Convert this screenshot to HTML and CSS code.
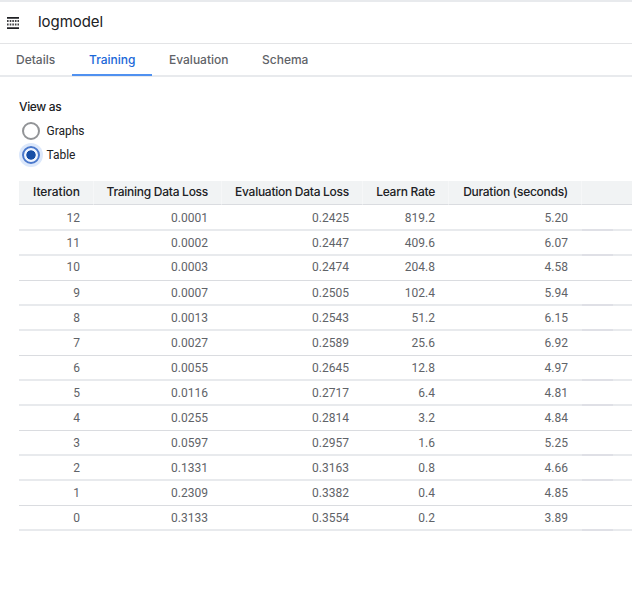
FILE: index.html
```html
<!DOCTYPE html>
<html lang="en">
<head>
<meta charset="utf-8">
<title>logmodel</title>
<link rel="stylesheet" href="styles.css">
</head>
<body>
<header class="header">
<svg class="icon" width="12" height="12" viewBox="0 0 12 12" fill="#202124"><path d="M0 0h12v1.7H0zM0 10.2h12V12H0z"/><path opacity=".85" d="M0 3h1.6v2H0zM2.7 3h1.6v2H2.7zM5.3 3h1.6v2H5.3zM7.9 3h1.6v2H7.9zM10.5 3H12v2h-1.5zM0 6.5h1.6v2H0zM2.7 6.5h1.6v2H2.7zM5.3 6.5h1.6v2H5.3zM7.9 6.5h1.6v2H7.9zM10.5 6.5H12v2h-1.5z"/></svg>
<h1 class="title">logmodel</h1>
</header>
<nav class="tabs">
<a class="tab details">Details</a>
<a class="tab training">Training</a>
<a class="tab evaluation">Evaluation</a>
<a class="tab schema">Schema</a>
</nav>
<main class="content">
<h2 class="view-label">View as</h2>
<div class="option"><span class="radio"></span><span>Graphs</span></div>
<div class="option"><span class="radio checked"></span><span>Table</span></div>
<table class="results">
<colgroup><col class="c1"><col class="c2"><col class="c3"><col class="c4"><col class="c5"><col class="c6"><col></colgroup>
<thead><tr><th>Iteration</th><th>Training Data Loss</th><th>Evaluation Data Loss</th><th>Learn Rate</th><th>Duration (seconds)</th><th></th><th></th></tr></thead>
<tbody>
<tr><td>12</td><td>0.0001</td><td>0.2425</td><td>819.2</td><td>5.20</td><td></td><td></td></tr>
<tr><td>11</td><td>0.0002</td><td>0.2447</td><td>409.6</td><td>6.07</td><td></td><td></td></tr>
<tr><td>10</td><td>0.0003</td><td>0.2474</td><td>204.8</td><td>4.58</td><td></td><td></td></tr>
<tr><td>9</td><td>0.0007</td><td>0.2505</td><td>102.4</td><td>5.94</td><td></td><td></td></tr>
<tr><td>8</td><td>0.0013</td><td>0.2543</td><td>51.2</td><td>6.15</td><td></td><td></td></tr>
<tr><td>7</td><td>0.0027</td><td>0.2589</td><td>25.6</td><td>6.92</td><td></td><td></td></tr>
<tr><td>6</td><td>0.0055</td><td>0.2645</td><td>12.8</td><td>4.97</td><td></td><td></td></tr>
<tr><td>5</td><td>0.0116</td><td>0.2717</td><td>6.4</td><td>4.81</td><td></td><td></td></tr>
<tr><td>4</td><td>0.0255</td><td>0.2814</td><td>3.2</td><td>4.84</td><td></td><td></td></tr>
<tr><td>3</td><td>0.0597</td><td>0.2957</td><td>1.6</td><td>5.25</td><td></td><td></td></tr>
<tr><td>2</td><td>0.1331</td><td>0.3163</td><td>0.8</td><td>4.66</td><td></td><td></td></tr>
<tr><td>1</td><td>0.2309</td><td>0.3382</td><td>0.4</td><td>4.85</td><td></td><td></td></tr>
<tr><td>0</td><td>0.3133</td><td>0.3554</td><td>0.2</td><td>3.89</td><td></td><td></td></tr>
</tbody>
</table>
</main>
</body>
</html>
```
FILE: styles.css
```css
* { box-sizing: border-box; }
body { margin: 0; height: 613px; overflow: hidden; background: #fff; color: #202124; font-family: Roboto, sans-serif; font-size: 12px; }
.header { display: flex; align-items: center; height: 44px; padding-left: 7px; border-top: 2px solid #e8eaed; border-bottom: 1px solid #e3e4e6; }
.icon { margin-top: 1px; }
.title { margin: -2px 0 0 19px; font-family: Inter, sans-serif; font-size: 15px; font-weight: 400; line-height: 20px; letter-spacing: -.05px; }
.tabs { display: flex; height: 33px; border-bottom: 2px solid #e8eaed; font-family: Inter, sans-serif; font-size: 12px; font-weight: 450; color: #5f6368; }
.tab { height: 32px; padding: 0 16px; line-height: 32px; }
.details { width: 72px; }
.training { width: 80px; padding-left: 17px; color: #1a67d8; border-bottom: 2px solid #5091f0; }
.evaluation { width: 94px; padding-left: 17px; }
.schema { width: 80px; }
.content { padding: 22px 0 0 19px; }
.view-label { margin: 0 0 4px; font-family: Inter, sans-serif; font-size: 12px; font-weight: 500; line-height: 16px; letter-spacing: -.35px; }
.option { display: flex; align-items: center; gap: 7px; height: 24px; padding-left: 3px; letter-spacing: -.03px; }
.option span:last-child { margin-left: -.5px; }
.radio { width: 18px; height: 18px; border: 2px solid #929497; border-radius: 50%; }
.checked { border-color: #4a78cc; background: radial-gradient(circle, #174ea6 0 4.3px, #f0f5fe 5px); box-shadow: 0 0 0 3px #dce8fb; }
.results { width: 613px; margin-top: 14px; table-layout: fixed; border-collapse: separate; border-spacing: 0; }
.c1 { width: 75px; }
.c2 { width: 128px; }
.c3 { width: 141px; }
.c4 { width: 86px; }
.c5 { width: 133px; }
.c6 { width: 31px; }
th, td { padding: 0 14px 0 0; text-align: right; white-space: nowrap; }
th { height: 24px; padding-bottom: 2px; border-bottom: 1px solid #dadce0; background: #f1f3f4; font-family: Inter, sans-serif; font-weight: 500; font-size: 12px; letter-spacing: -.27px; }
th:not(:nth-last-child(-n+2)) { border-right: 1px solid #f6f7f8; padding-right: 13px; }
th:nth-child(1) { letter-spacing: -.05px; }
td { height: 25px; padding-top: 1px; border-bottom: 2px solid #e8eaed; color: #5f6368; }
td:nth-child(6) { border-bottom-color: #dfe0e6; }
tr:first-child td { height: 26px; padding-top: 2px; }
tr:nth-child(3n) td { padding-top: 0; border-bottom: 1px solid #dadce0; }
tr:nth-child(3) td { padding-bottom: 2px; }
```
